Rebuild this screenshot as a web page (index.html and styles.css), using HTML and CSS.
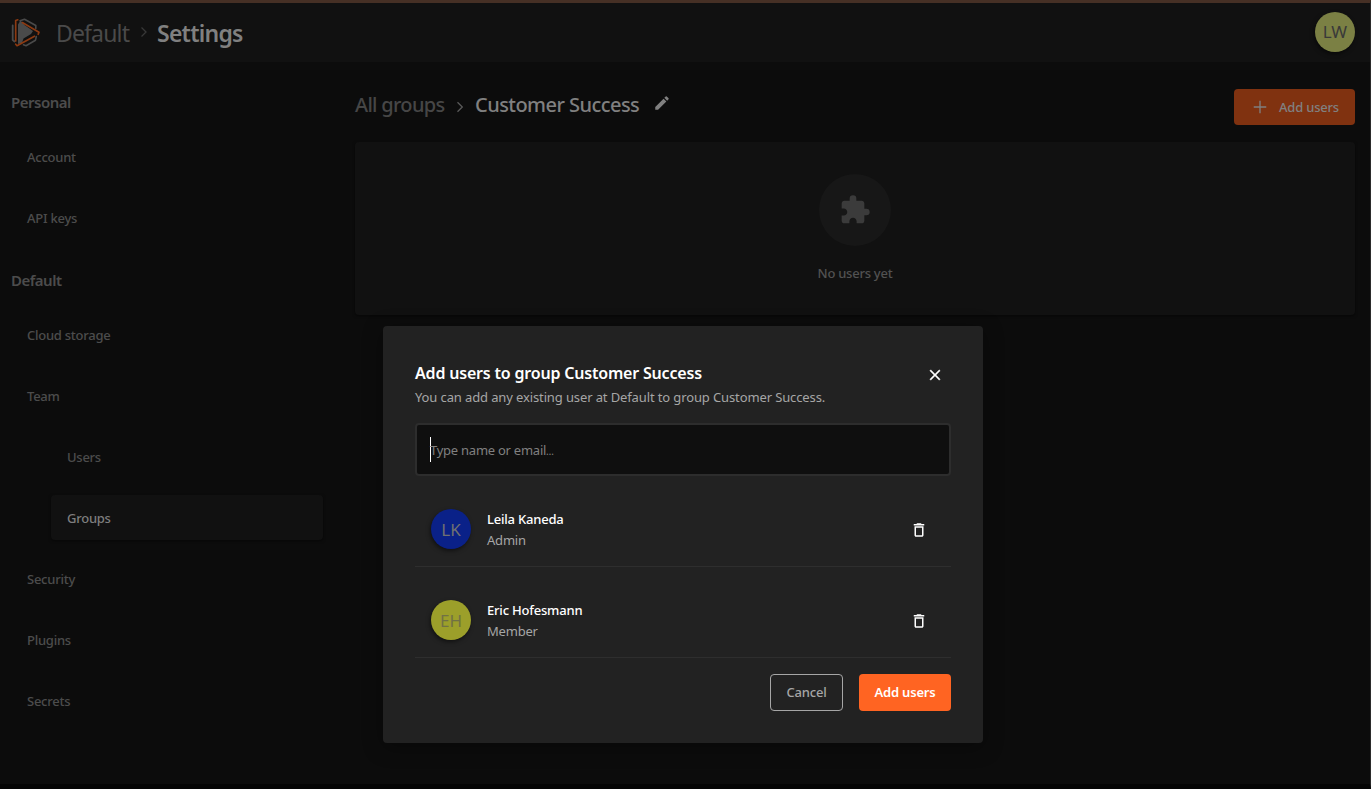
FILE: index.html
```html
<!DOCTYPE html>
<html lang="en">
<head>
<meta charset="utf-8">
<title>Settings</title>
<link rel="stylesheet" href="styles.css">
</head>
<body>
<div class="app">
  <header class="topbar">
    <svg class="logo" width="30" height="30" viewBox="0 0 30 30" fill="none" stroke-linejoin="round" stroke-linecap="round">
      <path d="M1.700 7.500v14.500l1.800 1.500" stroke="#4a4a4a" stroke-width="1.800"/>
      <path d="M7 6.500l2.500-4 4 4.500 8.500 6-2 3-7.500 4.500-1.500 4.500-4 1z" fill="#4a4a4a"/>
      <path d="M9 2.800l4.500-1.600L24.800 7.500v3M12.500 26.800l2.500.9 9.500-5.500.8-3.700" stroke="#4a4a4a" stroke-width="1.600"/>
      <path d="M6.800 1.800L4.700 2.500v20.500M11.300 4.600L28 14.300l-.8 2M23.500 18.200L6 27.700l-1.300-1.500" stroke="#8c3a12" stroke-width="1.700"/>
    </svg>
    <span class="org">Default</span>
    <svg class="crumb-sep" width="8" height="12" viewBox="0 0 8 12" fill="none" stroke="#383838" stroke-width="1.300"><path d="M1.500 1.500L6 6l-4.500 4.500"/></svg>
    <span class="page-name">Settings</span>
    <span class="avatar me">LW</span>
  </header>
  <div class="body">
    <nav class="sidebar">
      <h3>Personal</h3>
      <a class="item">Account</a>
      <a class="item">API keys</a>
      <h3>Default</h3>
      <a class="item">Cloud storage</a>
      <a class="item">Team</a>
      <a class="item sub">Users</a>
      <a class="item sub active">Groups</a>
      <a class="item">Security</a>
      <a class="item">Plugins</a>
      <a class="item">Secrets</a>
    </nav>
    <main class="main">
      <div class="main-head">
        <span class="all">All groups</span>
        <svg class="sep" width="8" height="12" viewBox="0 0 8 12" fill="none" stroke="#5a5a5a" stroke-width="1.300"><path d="M1.500 1.200L6.300 6l-4.800 4.800"/></svg>
        <span class="group">Customer Success</span>
        <svg class="pencil" width="18" height="18" viewBox="0 0 24 24" fill="#808080"><path d="M3 17.250V21h3.750L17.810 9.940l-3.750-3.750L3 17.250zM20.710 7.040a1 1 0 0 0 0-1.410l-2.340-2.340a1 1 0 0 0-1.410 0l-1.830 1.830 3.750 3.750 1.830-1.830z"/></svg>
        <button class="btn add"><svg width="20" height="20" viewBox="0 0 24 24" fill="#7f7f7f"><path d="M19.500 12.800h-6.700v6.700h-1.600v-6.700H4.500v-1.600h6.700V4.500h1.600v6.700h6.700z"/></svg><span>Add users</span></button>
      </div>
      <section class="empty">
        <div class="badge"><svg width="32" height="32" viewBox="0 0 24 24" fill="#3b3b3b"><path d="M20.500 11H19V7c0-1.100-.9-2-2-2h-4V3.500a2.500 2.500 0 0 0-5 0V5H4c-1.100 0-1.990.9-1.990 2v3.800H3.500c1.490 0 2.700 1.210 2.700 2.700s-1.210 2.700-2.700 2.700H2V20c0 1.100.9 2 2 2h3.800v-1.500c0-1.490 1.210-2.700 2.700-2.700s2.700 1.210 2.700 2.700V22H17c1.100 0 2-.9 2-2v-4h1.500a2.500 2.500 0 0 0 0-5z"/></svg></div>
        <p>No users yet</p>
      </section>
    </main>
  </div>
  <div class="modal">
    <div class="modal-head">
      <h2>Add users to group Customer Success</h2>
      <svg class="close" width="18" height="18" viewBox="0 0 24 24" fill="#fff" stroke="#fff" stroke-width=".4"><path d="M19 6.410L17.590 5 12 10.590 6.410 5 5 6.410 10.590 12 5 17.590 6.410 19 12 13.410 17.590 19 19 17.590 13.410 12z"/></svg>
    </div>
    <p class="desc">You can add any existing user at Default to group Customer Success.</p>
    <div class="field"><span class="caret"></span><span class="placeholder">Type name or email<span class="dots">…</span></span></div>
    <div class="row">
      <span class="avatar blue">LK</span>
      <div class="who"><b>Leila Kaneda</b><span>Admin</span></div>
      <svg class="trash" width="18" height="18" viewBox="0 0 24 24" fill="#fff"><path d="M6 19c0 1.100.9 2 2 2h8c1.100 0 2-.9 2-2V7H6v12zM8 9h8v10H8V9zm7.500-5l-1-1h-5l-1 1H5v2h14V4z"/></svg>
    </div>
    <div class="row">
      <span class="avatar olive">EH</span>
      <div class="who"><b>Eric Hofesmann</b><span>Member</span></div>
      <svg class="trash" width="18" height="18" viewBox="0 0 24 24" fill="#fff"><path d="M6 19c0 1.100.9 2 2 2h8c1.100 0 2-.9 2-2V7H6v12zM8 9h8v10H8V9zm7.500-5l-1-1h-5l-1 1H5v2h14V4z"/></svg>
    </div>
    <div class="actions">
      <button class="btn cancel">Cancel</button>
      <button class="btn primary">Add users</button>
    </div>
  </div>
</div>
</body>
</html>
```
FILE: styles.css
```css
* { box-sizing: border-box; margin: 0; padding: 0; }
body { background: #0c0c0c; font-family: "Noto Sans", sans-serif; font-size: 13px; font-weight: 500; letter-spacing: -0.25px; line-height: 20px; white-space: nowrap; overflow: hidden; }
.app { position: relative; height: 789px; border-top: 3px solid #463025; border-right: 1px solid #2b2b2b; border-bottom: 5px solid #050505; }
.topbar { display: flex; align-items: center; height: 59px; padding: 0 15px 0 11px; background: #111; }
.org { margin-left: 15px; width: 73px; font-size: 23px; font-weight: 400; line-height: 32px; letter-spacing: -0.85px; color: #4a4a4a; }
.crumb-sep { margin: 0 9px 2px 11px; }
.page-name { font-size: 23px; font-weight: 600; line-height: 32px; letter-spacing: -0.75px; color: #808080; }
.avatar { display: flex; flex: none; align-items: center; justify-content: center; width: 40px; height: 40px; border-radius: 50%; font-size: 17px; font-weight: 400; letter-spacing: 0; box-shadow: -1px 2px 4px rgba(0,0,0,.5); }
.row .avatar { padding-top: 2px; }
.me { margin: 0 0 2px auto; background: #7b8044; color: #393939; }
.body { display: flex; }
.sidebar { display: flex; flex-direction: column; width: 323px; padding: 16px 0 0 11px; color: #4c4c4c; flex: none; }
.sidebar h3 { height: 24px; margin: 12px 0 20px; font-size: 15px; font-weight: 600; line-height: 24px; letter-spacing: -0.5px; }
.item { display: flex; align-items: center; height: 45px; margin-bottom: 16px; padding-left: 16px; }
.sub { margin-left: 40px; }
.active { background: #111; color: #7e7e7e; border-radius: 4px; box-shadow: 0 1px 3px rgba(0,0,0,.5); }
.main { width: 1000px; margin-left: 32px; padding-top: 27px; }
.main-head { display: flex; align-items: center; height: 36px; font-size: 20px; line-height: 32px; }
.all, .group { padding-bottom: 4px; }
.all { width: 101px; color: #464646; letter-spacing: -0.7px; }
.group { width: 168px; margin-left: 11px; color: #808080; letter-spacing: -0.55px; }
.pencil { margin: 0 0 9px 10px; }
.btn { display: flex; align-items: center; justify-content: center; border: 0; border-radius: 4px; font: 500 13px/20px "Noto Sans", sans-serif; letter-spacing: -0.2px; }
.add { width: 121px; height: 36px; margin-left: auto; gap: 9px; background: #803210; color: #808080; }
.empty { display: flex; flex-direction: column; align-items: center; height: 173px; margin-top: 17px; padding-top: 32px; background: #111; border-radius: 4px; box-shadow: 0 1px 3px rgba(0,0,0,.5); color: #525252; }
.badge { display: flex; align-items: center; justify-content: center; width: 72px; height: 72px; border-radius: 50%; background: #171717; }
.empty p { margin-top: 17px; }
.modal { position: absolute; left: 383px; top: 323px; width: 600px; height: 417px; padding: 32px; background: #222; border-radius: 4px; box-shadow: 0 4px 20px rgba(0,0,0,.35); }
.modal-head { display: flex; justify-content: space-between; height: 30px; }
.modal-head h2 { color: #fff; font-size: 16px; font-weight: 600; line-height: 30px; letter-spacing: -0.19px; }
.close { margin: 8px 7px 0 0; }
.desc { height: 35px; line-height: 19px; font-weight: 400; letter-spacing: -0.12px; color: #a6a6a6; }
.field { display: flex; align-items: center; height: 53px; padding-left: 13px; background: #0f0f0f; border: 2px solid #2d2d2d; border-radius: 4px; color: #808080; font-weight: 400; }
.caret { width: 1px; height: 25px; margin-right: -1px; background: #fff; }
.placeholder { padding-top: 2px; }
.dots { font-size: 10px; letter-spacing: 0; }
.row { display: flex; height: 91px; padding: 33px 23px 0 16px; border-bottom: 1px solid #2e2e2e; }
.blue { background: #0a2188; color: #717171; }
.olive { background: #9c9f2a; color: #717144; }
.who { display: flex; flex-direction: column; margin-left: 16px; line-height: 21px; font-weight: 400; letter-spacing: -0.2px; color: #a6a6a6; }
.who b { color: #fff; font-weight: 500; }
.trash { margin: 12px 0 0 auto; }
.actions { display: flex; justify-content: flex-end; gap: 16px; margin-top: 16px; }
.actions .btn { height: 37px; padding-bottom: 2px; }
.cancel { width: 73px; border: 1px solid #a6a6a6; background: transparent; color: #a6a6a6; }
.primary { width: 92px; background: #ff6422; color: #fff; font-weight: 600; }
```
